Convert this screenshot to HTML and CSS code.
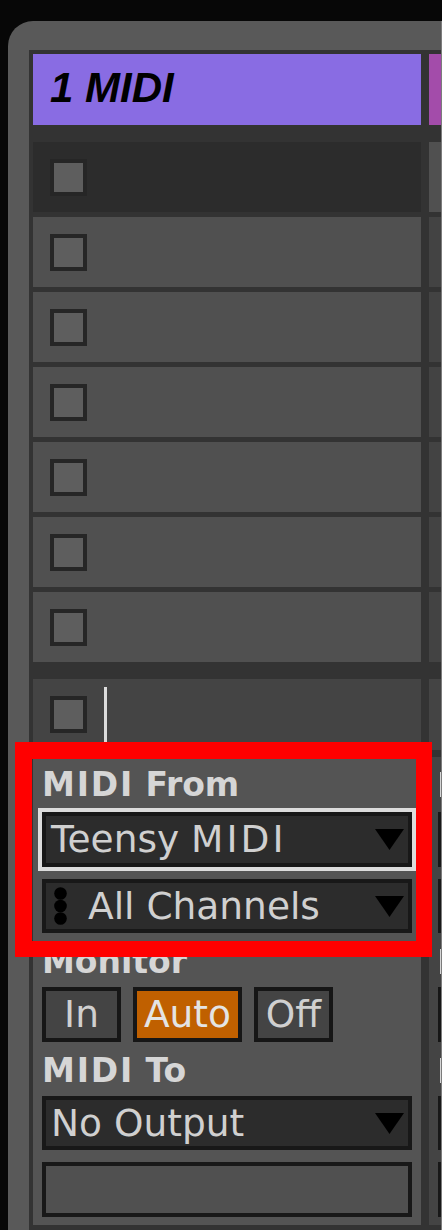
FILE: index.html
```html
<!DOCTYPE html>
<html>
<head>
<meta charset="utf-8">
<title>MIDI Track</title>
<link rel="stylesheet" href="styles.css">
</head>
<body>
<div class="panel">
  <div class="tracks">
    <div class="track">
      <div class="header">1 MIDI</div>
      <div class="slots">
        <div class="slot slot-sel"><span class="stop"></span></div>
        <div class="slot"><span class="stop"></span></div>
        <div class="slot"><span class="stop"></span></div>
        <div class="slot"><span class="stop"></span></div>
        <div class="slot"><span class="stop"></span></div>
        <div class="slot"><span class="stop"></span></div>
        <div class="slot"><span class="stop"></span></div>
      </div>
      <div class="stoprow"><span class="stop stop-row"></span><span class="cursor"></span></div>
      <div class="io">
        <div class="label lbl-from"><span class="wide-l">MIDI</span> From</div>
        <div class="dd dd-focus"><span class="dd-text">Teensy <span class="wide-v">MIDI</span></span><svg class="arrow" width="29" height="21" viewBox="0 0 29 21"><polygon points="0,0 29,0 14.5,21" fill="#000"/></svg></div>
        <div class="dd dd-ch"><svg class="chan-icon" width="13" height="38" viewBox="0 0 13 38"><circle cx="6.5" cy="6.5" r="6.3" fill="#000"/><circle cx="6.5" cy="19" r="6.3" fill="#000"/><circle cx="6.5" cy="31.5" r="6.3" fill="#000"/></svg><span class="dd-text">All Channels</span><svg class="arrow" width="29" height="21" viewBox="0 0 29 21"><polygon points="0,0 29,0 14.5,21" fill="#000"/></svg></div>
        <div class="label lbl-mon">Monitor</div>
        <div class="monitor"><span class="mbtn">In</span><span class="mbtn mbtn-auto">Auto</span><span class="mbtn">Off</span></div>
        <div class="label lbl-to"><span class="wide-l">MIDI</span> To</div>
        <div class="dd dd-out"><span class="dd-text">No Output</span><svg class="arrow" width="29" height="21" viewBox="0 0 29 21"><polygon points="0,0 29,0 14.5,21" fill="#000"/></svg></div>
        <div class="box-empty"></div>
      </div>
    </div>
    <div class="track track-2">
      <div class="header header-2"></div>
      <div class="slots">
        <div class="slot"><span class="stop"></span></div>
        <div class="slot slot-2"><span class="stop"></span></div>
        <div class="slot slot-2"><span class="stop"></span></div>
        <div class="slot slot-2"><span class="stop"></span></div>
        <div class="slot slot-2"><span class="stop"></span></div>
        <div class="slot slot-2"><span class="stop"></span></div>
        <div class="slot slot-2"><span class="stop"></span></div>
      </div>
      <div class="stoprow"><span class="stop stop-row"></span></div>
      <div class="io io-2">
        <div class="label-stub lbl-from"><span class="stub"></span></div>
        <div class="dd"></div>
        <div class="dd dd-ch"></div>
        <div class="label-stub lbl-mon"><span class="stub"></span></div>
        <div class="monitor"><span class="mbtn"></span><span class="mbtn mbtn-auto"></span><span class="mbtn"></span></div>
        <div class="label-stub lbl-to"><span class="stub"></span></div>
        <div class="dd dd-out"></div>
        <div class="box-empty"></div>
      </div>
    </div>
  </div>
</div>
<div class="highlight"></div>
</body>
</html>
```

FILE: styles.css
```css
html, body {
  margin: 0;
  padding: 0;
}
body {
  background: #070707;
  width: 442px;
  height: 1230px;
  overflow: hidden;
  position: relative;
  font-family: "DejaVu Sans", "Liberation Sans", sans-serif;
}
.panel {
  margin: 21px 0 0 8px;
  height: 1209px;
  box-sizing: border-box;
  background: #595959;
  border-top-left-radius: 25px;
  padding: 29px 0 0 21px;
  border-right: 1px solid #7c7c7c;
}
.tracks {
  height: 100%;
  box-sizing: border-box;
  background: #333333;
  padding: 4px 0 0 4px;
  display: flex;
  gap: 8px;
  overflow: hidden;
}
.track {
  flex: 0 0 388px;
  display: flex;
  flex-direction: column;
}
.header {
  height: 71px;
  box-sizing: border-box;
  background: #896ce3;
  color: #000;
  font: italic bold 42px/67px "Liberation Sans", Arial, sans-serif;
  padding: 0 0 4px 17px;
  white-space: nowrap;
}
.header-2 {
  background: #a34caa;
}
.slots {
  margin-top: 17px;
  display: flex;
  flex-direction: column;
  gap: 5px;
}
.slot {
  height: 70px;
  background: #505050;
  display: flex;
  align-items: center;
  padding-left: 17px;
}
.slot-sel {
  background: #2c2c2c;
}
.slot-2 {
  background: #434343;
}
.stop {
  width: 37px;
  height: 37px;
  box-sizing: border-box;
  border: 4px solid #262626;
  background: #5e5e5e;
}
.stoprow {
  margin-top: 17px;
  height: 71px;
  background: #444444;
  display: flex;
  align-items: flex-start;
  padding-left: 17px;
}
.stop-row {
  margin-top: 17px;
}
.cursor {
  width: 3px;
  height: 56px;
  margin: 8px 0 0 17px;
  background: #dcdcdc;
}
.io {
  margin-top: 7px;
  height: 468px;
  box-sizing: border-box;
  background: #545454;
  padding: 9px 9px 0 9px;
}
.io-2 {
  background: #444444;
}
.label {
  font: bold 33px/38px "DejaVu Sans", sans-serif;
  color: #d6d6d6;
  white-space: nowrap;
}
.wide-l {
  letter-spacing: 1.8px;
}
.wide-v {
  letter-spacing: 3px;
}
.label-stub {
  height: 38px;
  display: flex;
  align-items: flex-start;
  padding-left: 2px;
}
.stub {
  width: 3px;
  height: 25px;
  margin-top: 6px;
  background: #d6d6d6;
}
.lbl-from {
  margin-bottom: 8px;
}
.lbl-mon {
  margin-top: 10px;
  margin-bottom: 6px;
}
.lbl-to {
  margin-top: 10px;
  margin-bottom: 6px;
}
.dd {
  height: 55px;
  box-sizing: border-box;
  border: 4px solid #181818;
  background: #2c2c2c;
  display: flex;
  align-items: center;
  padding: 0 4px 0 5px;
  font: 37.5px/47px "DejaVu Sans", sans-serif;
  color: #d0d0d0;
  white-space: nowrap;
}
.dd-focus {
  outline: 4px solid #dcdcdc;
}
.dd-ch {
  margin-top: 12px;
  height: 54px;
}
.dd-out {
  height: 54px;
}
.dd-text {
  flex: 1;
}
.arrow {
  flex: 0 0 auto;
  display: block;
}
.chan-icon {
  flex: 0 0 auto;
  display: block;
  margin: 0 21px 0 3px;
}
.monitor {
  display: flex;
  gap: 12px;
}
.mbtn {
  width: 79px;
  height: 55px;
  box-sizing: border-box;
  border: 4px solid #161616;
  background: #444444;
  font: 37.5px/47px "DejaVu Sans", sans-serif;
  color: #d0d0d0;
  text-align: center;
}
.mbtn-auto {
  width: 109px;
  background: #c06000;
  color: #e4e4e4;
}
.box-empty {
  margin-top: 12px;
  height: 55px;
  box-sizing: border-box;
  border: 4px solid #181818;
  background: #505050;
}
.highlight {
  position: absolute;
  left: 15px;
  top: 742px;
  width: 417px;
  height: 215px;
  box-sizing: border-box;
  border: 17px solid #ff0000;
  border-right-width: 16px;
  border-bottom-width: 16px;
  pointer-events: none;
}
```
